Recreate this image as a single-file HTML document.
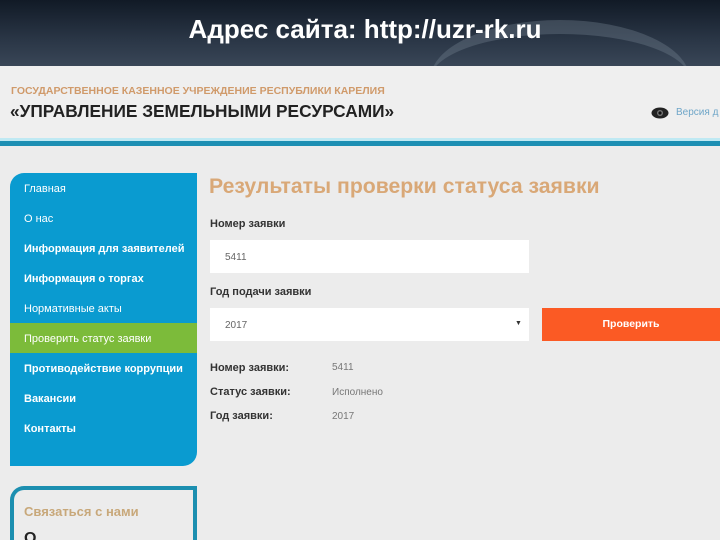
<!DOCTYPE html>
<html><head><meta charset="utf-8"><style>
*{margin:0;padding:0;box-sizing:border-box}
html,body{width:720px;height:540px;overflow:hidden}
body{background:#ececec;font-family:"Liberation Sans","DejaVu Sans",sans-serif;position:relative}
.top{position:absolute;left:0;top:0;width:720px;height:66px;background:linear-gradient(180deg,#111a26 0%,#2a3646 60%,#394657 100%);overflow:hidden}
.top h1{position:absolute;left:0;width:720px;top:14px;text-align:center;color:#fff;font-size:26px;font-weight:bold;padding-left:10px}
.arc{position:absolute;left:430px;top:20px;width:260px;height:120px;border-radius:50%;border-top:14px solid rgba(120,135,150,.35)}
.a{position:absolute;white-space:nowrap}
.hdr{position:absolute;left:0;top:66px;width:720px;height:74px;background:#efefef}
.line1{position:absolute;left:0;top:138px;width:720px;height:3px;background:#bfe9f3}
.line2{position:absolute;left:0;top:141px;width:720px;height:5px;background:#1d8fb3}
.side{position:absolute;left:10px;top:173px;width:187px;height:293px;background:#0a9bd0;border-radius:14px 0 14px 0}
.side div{position:absolute;left:14px;color:#fff;font-size:11px;font-weight:bold}
.green{position:absolute;left:10px;top:323px;width:187px;height:30px;background:#7cbb3a}
.box2{position:absolute;left:10px;top:486px;width:187px;height:70px;border:4px solid #1c8fb0;border-bottom:none;border-radius:14px 0 0 0;background:#ececec}
.lbl{font-size:11px;font-weight:bold;color:#333}
.inp{position:absolute;background:#fff;left:210px;width:319px;height:33px}
</style></head><body>
<div class="top"><div class="arc"></div><h1>Адрес сайта: http://uzr-rk.ru</h1></div>
<div class="hdr"></div>
<div class="a" style="left:11px;top:85px;font-size:10.5px;color:#d09a6a;font-weight:bold">ГОСУДАРСТВЕННОЕ КАЗЕННОЕ УЧРЕЖДЕНИЕ РЕСПУБЛИКИ КАРЕЛИЯ</div>
<div class="a" style="left:10px;top:101px;font-size:17.3px;color:#222;font-weight:bold">«УПРАВЛЕНИЕ ЗЕМЕЛЬНЫМИ РЕСУРСАМИ»</div>
<svg class="a" style="left:651px;top:107px" width="18" height="12" viewBox="0 0 18 12"><ellipse cx="9" cy="6" rx="8.5" ry="5.5" fill="#222"/><circle cx="9" cy="6" r="3" fill="#777"/><circle cx="9" cy="6" r="1.6" fill="#111"/></svg>
<div class="a" style="left:676px;top:107px;font-size:10px;color:#6fa6c8">Версия д</div>
<div class="line1"></div><div class="line2"></div>
<div class="side">
<div style="top:10px;font-weight:normal">Главная</div>
<div style="top:40px;font-weight:normal">О нас</div>
<div style="top:70px">Информация для заявителей</div>
<div style="top:100px">Информация о торгах</div>
<div style="top:130px;font-weight:normal">Нормативные акты</div>
<div style="top:190px">Противодействие коррупции</div>
<div style="top:220px">Вакансии</div>
<div style="top:250px">Контакты</div>
</div>
<div class="green"></div>
<div class="a" style="left:24px;top:333px;font-size:11px;color:#fff">Проверить статус заявки</div>
<div class="box2"></div>
<div class="a" style="left:24px;top:504px;font-size:13px;color:#c8a87a;font-weight:bold">Связаться с нами</div>
<div class="a" style="left:24px;top:530px;font-size:16px;color:#222;font-weight:bold">О</div>
<div class="a" style="left:209px;top:175px;font-size:21.2px;color:#d9a877;font-weight:bold">Результаты проверки статуса заявки</div>
<div class="a lbl" style="left:210px;top:218px">Номер заявки</div>
<div class="inp" style="top:240px"></div>
<div class="a" style="left:225px;top:252px;font-size:10px;color:#666">5411</div>
<div class="a lbl" style="left:210px;top:286px">Год подачи заявки</div>
<div class="inp" style="top:308px"></div>
<div class="a" style="left:225px;top:320px;font-size:10px;color:#666">2017</div>
<div class="a" style="left:515px;top:320px;font-size:7px;color:#333">▼</div>
<div class="a" style="left:542px;top:308px;width:178px;height:33px;background:#fb5a24;color:#fff;font-size:10.5px;font-weight:bold;text-align:center;line-height:33px">Проверить</div>
<div class="a lbl" style="left:210px;top:362px">Номер заявки:</div>
<div class="a lbl" style="left:210px;top:386px">Статус заявки:</div>
<div class="a lbl" style="left:210px;top:410px">Год заявки:</div>
<div class="a" style="left:332px;top:362px;font-size:10px;color:#777">5411</div>
<div class="a" style="left:332px;top:387px;font-size:10px;color:#777">Исполнено</div>
<div class="a" style="left:332px;top:411px;font-size:10px;color:#777">2017</div>
</body></html>
